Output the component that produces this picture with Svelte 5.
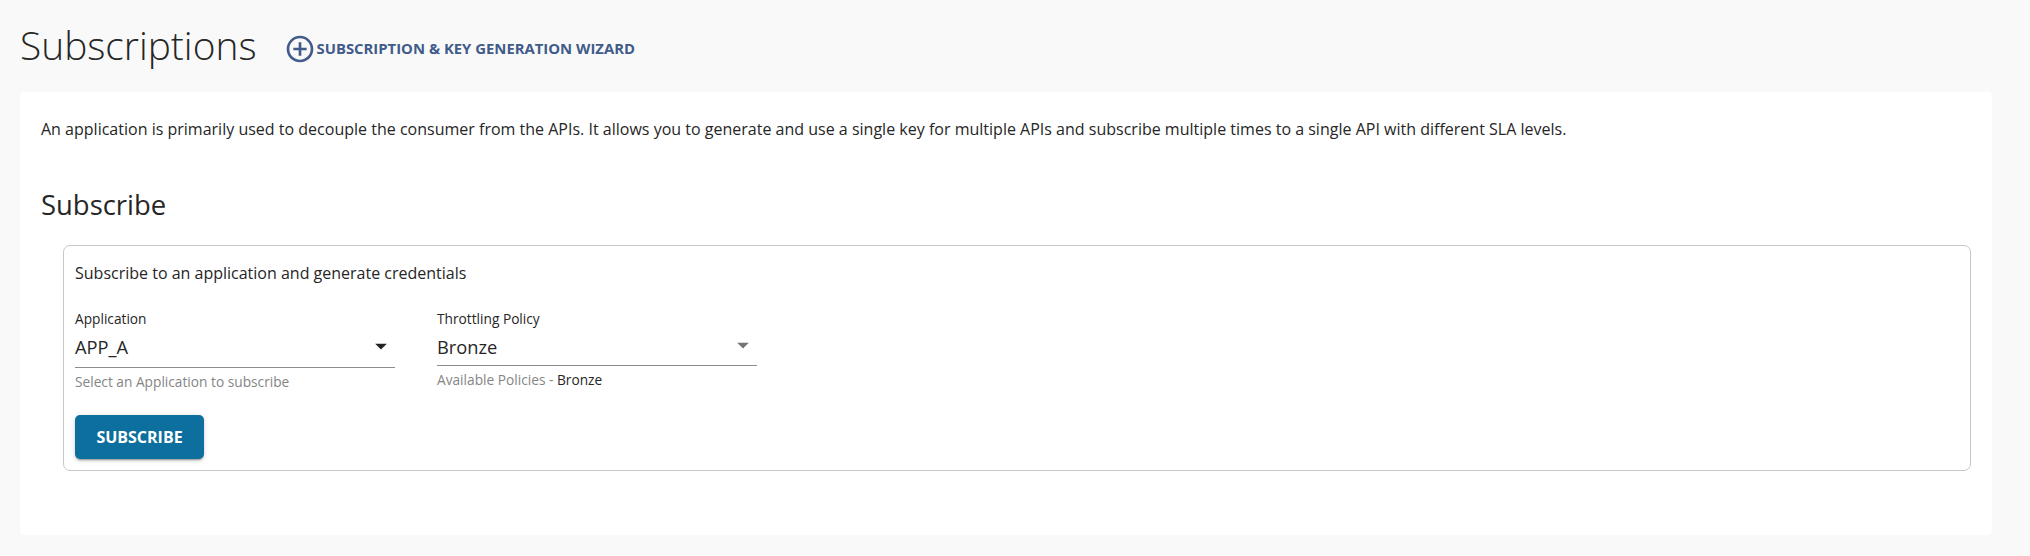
<script>
  const application = 'APP_A';
  const policy = 'Bronze';
</script>

<main>
  <header>
    <h1>Subscriptions</h1>
    <button class="wizard">
      <svg viewBox="0 0 24 24"><path d="M13 7h-2v4H7v2h4v4h2v-4h4v-2h-4V7zm-1-5C6.480 2 2 6.480 2 12s4.480 10 10 10 10-4.480 10-10S17.520 2 12 2zm0 18c-4.410 0-8-3.590-8-8s3.590-8 8-8 8 3.590 8 8-3.590 8-8 8z" /></svg>
      <span>SUBSCRIPTION &amp; KEY GENERATION WIZARD</span>
    </button>
  </header>
  <section class="paper">
    <p class="intro">An application is primarily used to decouple the consumer from the APIs. It allows you to generate and use a single key for multiple APIs and subscribe multiple times to a single API with different SLA levels.</p>
    <h2>Subscribe</h2>
    <div class="card">
      <p class="lead">Subscribe to an application and generate credentials</p>
      <div class="fields">
        <div class="field">
          <label for="app">Application</label>
          <div class="select app" id="app"><span>{application}</span><svg viewBox="0 0 24 24"><path d="M7 10l5 5 5-5z" /></svg></div>
          <div class="help">Select an Application to subscribe</div>
        </div>
        <div class="field">
          <label for="policy">Throttling Policy</label>
          <div class="select" id="policy"><span>{policy}</span><svg viewBox="0 0 24 24"><path d="M7 10l5 5 5-5z" /></svg></div>
          <div class="help">Available Policies - <b>{policy}</b></div>
        </div>
      </div>
      <button class="submit">SUBSCRIBE</button>
    </div>
  </section>
</main>

<style>
  :global(body) { background: #f9f9f9; }
  * { box-sizing: border-box; }
  main { height: 556px; padding: 18px 38px 0 20px; font-family: "Open Sans", sans-serif; color: #262626; background: #f9f9f9; }
  h1, h2, p { margin: 0; font-weight: 400; }
  button { border: 0; font-family: inherit; cursor: pointer; }
  header { height: 74px; display: flex; align-items: flex-start; }
  h1 { font-size: 38.86px; font-weight: 300; line-height: 54px; white-space: nowrap; }
  .wizard { display: flex; align-items: center; margin: 15px 0 0 28px; padding: 0; height: 32px; background: none; color: #415b8a; font-size: 14.86px; font-weight: 700; white-space: nowrap; }
  .wizard svg { width: 32px; height: 32px; fill: currentColor; }
  .wizard span { padding-bottom: 2px; }
  .paper { height: 443px; background: #fff; padding: 25px 21px 0; border-radius: 4.5px; }
  .intro { font-size: 16px; line-height: 24px; white-space: nowrap; letter-spacing: 0.007px; }
  h2 { margin-top: 46px; font-size: 27.43px; line-height: 36px; }
  .card { margin: 22px 0 0 22px; height: 226px; padding: 15px 11px; border: 1px solid #c8c8c8; border-radius: 7px; }
  .lead { font-size: 16px; line-height: 24px; }
  .fields { display: flex; gap: 42px; margin-top: 24px; height: 92px; }
  .field { width: 320px; }
  label { display: block; font-size: 13.71px; line-height: 20px; }
  .select { height: 37px; display: flex; align-items: center; justify-content: space-between; border-bottom: 1px solid #8c8c8c; font-size: 18.29px; }
  .select span { padding-bottom: 2px; }
  .select svg { width: 28px; height: 28px; margin-bottom: 4px; fill: #757575; }
  .app { height: 39px; padding-bottom: 2px; }
  .app svg { margin-bottom: 3px; fill: #222; }
  .help { margin-top: 3px; font-size: 13.71px; line-height: 22px; color: #858585; }
  .help b { font-weight: 400; color: #262626; }
  .submit { display: block; margin-top: 14px; width: 129px; height: 44px; padding: 0; color: #fff; background: #0d6f9d; border-radius: 5px; font-size: 16px; font-weight: 700; box-shadow: 0 3px 1px -2px rgba(0,0,0,.2), 0 2px 2px rgba(0,0,0,.14), 0 1px 6px rgba(0,0,0,.12); }
</style>
